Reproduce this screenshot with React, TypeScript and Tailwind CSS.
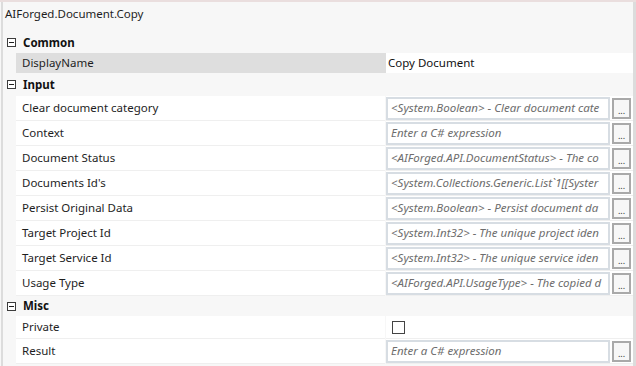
import React from "react";

const font = { fontFamily: '"Segoe UI", "Noto Sans", "Open Sans", sans-serif' };

function Minus() {
  return (
    <div className="w-[16px] flex items-center justify-center shrink-0">
      <div className="w-[9px] h-[9px] border border-[#3c3c3c] bg-white flex items-center justify-center">
        <div className="w-[5px] h-[1px] bg-[#1e1e1e]" />
      </div>
    </div>
  );
}

function Header({ label, h }: { label: string; h: string }) {
  return (
    <div className={`flex items-center ${h}`}>
      <Minus />
      <span className="ml-[4px] font-bold text-[11.5px] text-[#111]">{label}</span>
    </div>
  );
}

function ExprRow({ name, text }: { name: string; text: string }) {
  return (
    <div className="flex h-[25px] ml-[16px] gap-[1px]">
      <div className="w-[369px] bg-white flex items-center pl-[6px] text-[11.5px] text-[#1e1e1e] border-b border-[#efefef]">
        {name}
      </div>
      <div className="flex-1 bg-white flex items-center border-b border-[#efefef] pr-[2px]">
        <div className="w-[224px] h-[23px] border-2 border-[#d7dde3] bg-white overflow-hidden whitespace-nowrap flex items-center pl-[3px] italic text-[11.5px] text-[#6d6d6d]">
          <span className="block overflow-hidden w-[214px]">{text}</span>
        </div>
        <div className="ml-[2px] w-[19px] h-[21px] border-2 border-[#a9a9a9] bg-[#f7f7f7] flex items-end justify-center text-[9px] leading-[12px] text-[#333]">
          ...
        </div>
      </div>
    </div>
  );
}

export default function App() {
  const inputs: [string, string][] = [
    ["Clear document category", "<System.Boolean> - Clear document cate"],
    ["Context", "Enter a C# expression"],
    ["Document Status", "<AIForged.API.DocumentStatus> - The co"],
    ["Documents Id's", "<System.Collections.Generic.List`1[[Syster"],
    ["Persist Original Data", "<System.Boolean> - Persist document da"],
    ["Target Project Id", "<System.Int32> - The unique project iden"],
    ["Target Service Id", "<System.Int32> - The unique service iden"],
    ["Usage Type", "<AIForged.API.UsageType> - The copied d"],
  ];
  return (
    <div
      className="w-[636px] h-[366px] bg-[#f7f7f7] overflow-hidden border-t-2 border-[#eadede] flex"
      style={font}
    >
      <div className="w-[1px] bg-[#f7f7f7] shrink-0" />
      <div className="w-[2px] bg-[#dcdcdc] shrink-0" />
      <div className="flex-1 flex flex-col">
        <div className="h-[30px] flex items-start pt-[3px] pl-[2px] text-[11.5px] text-[#1e1e1e]">
          AIForged.Document.Copy
        </div>
        <Header label="Common" h="h-[21px]" />
        <div className="flex h-[20px] ml-[13px]">
          <div className="w-[370px] bg-[#dedede] flex items-center pl-[6px] text-[11.5px] text-[#1e1e1e]">
            DisplayName
          </div>
          <div className="flex-1 bg-white flex items-center pl-[2px] text-[11.5px] text-[#111]">
            Copy Document
          </div>
        </div>
        <Header label="Input" h="h-[23px]" />
        <div className="-ml-[3px]">
          {inputs.map(([n, t]) => (
            <ExprRow key={n} name={n} text={t} />
          ))}
        </div>
        <Header label="Misc" h="h-[20px]" />
        <div className="flex h-[23px] ml-[13px] gap-[1px]">
          <div className="w-[369px] bg-white flex items-center pl-[6px] text-[11.5px] text-[#1e1e1e] border-b border-[#efefef]">
            Private
          </div>
          <div className="flex-1 bg-white flex items-center pl-[6px] border-b border-[#efefef]">
            <div className="w-[13px] h-[13px] border border-[#444] bg-white" />
          </div>
        </div>
        <div className="-ml-[3px]">
          <ExprRow name="Result" text="Enter a C# expression" />
        </div>
      </div>
      <div className="w-[3px] bg-[#dcdcdc] shrink-0" />
      <div className="w-[1px] bg-[#f0f0f0] shrink-0" />
    </div>
  );
}
